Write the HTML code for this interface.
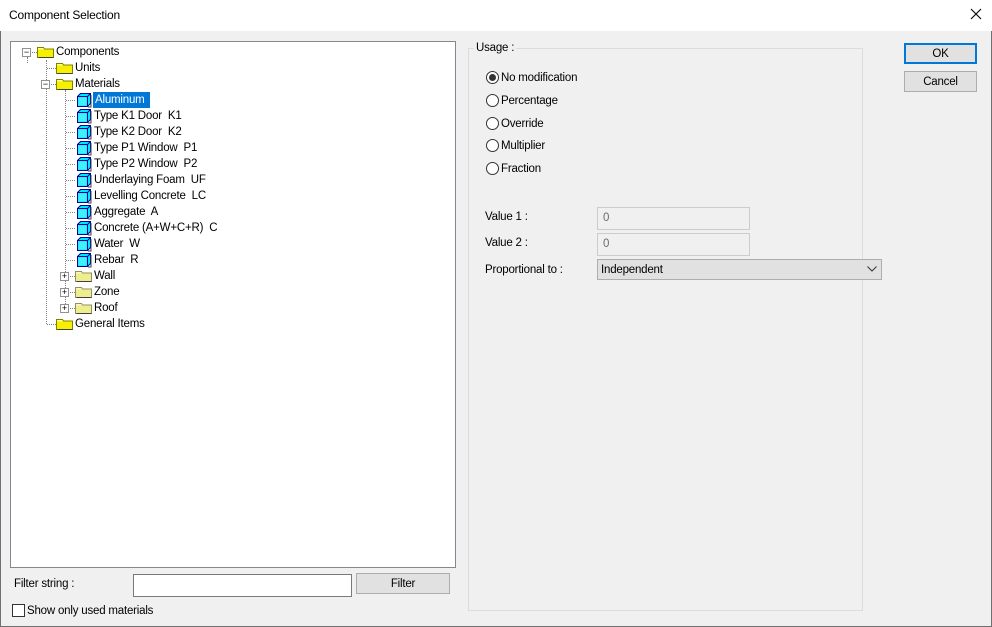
<!DOCTYPE html>
<html><head><meta charset="utf-8"><style>
*{box-sizing:border-box;margin:0;padding:0}
body{width:992px;height:627px;background:#f0f0f0;font-family:"Liberation Sans",sans-serif;font-size:11.5px;line-height:15px;letter-spacing:-0.2px;color:#000;position:relative;overflow:hidden}
.win{position:absolute;left:0;top:0;width:992px;height:627px;border:1px solid #707070;border-top:none}
.title{position:absolute;left:0;top:0;width:992px;height:31px;background:#fff}
.title span{position:absolute;left:9px;top:8px;font-size:12px}
.x{position:absolute;left:968px;top:6px;width:16px;height:16px}
.a{position:absolute}
.tree{position:absolute;left:10px;top:41px;width:446px;height:527px;background:#fff;border:1px solid #828790}
.row{position:absolute;height:16px;line-height:17px;white-space:nowrap}
.dv{position:absolute;border-left:1px dotted #808080;width:0}
.dh{position:absolute;border-top:1px dotted #808080;height:0}
.exp{position:absolute;width:9px;height:9px;border:1px solid #919191;background:#fff;font-size:9px;line-height:7px;text-align:center;color:#000;letter-spacing:0}
.btn{position:absolute;background:#e1e1e1;border:1px solid #adadad;text-align:center}
.inp{position:absolute;border:1px solid #7a7a7a;background:#fff}
.dis{position:absolute;border:1px solid #ccc;background:#f0f0f0;color:#6d6d6d;padding-left:5px;line-height:21px}
.rad{position:absolute;width:13px;height:13px;border:1px solid #333;border-radius:50%;background:#fff}
</style></head><body>
<div class="win"></div>
<div class="title"><span>Component Selection</span>
<svg class="x" viewBox="0 0 16 16"><path d="M3 3L13 13M13 3L3 13" stroke="#000" stroke-width="1.1"/></svg></div>

<div class="tree"></div>
<div class="dv" style="left:27px;top:57px;height:6px"></div>
<div class="dv" style="left:46px;top:60px;height:264px"></div>
<div class="dh" style="left:47px;top:68px;width:9px"></div>
<div class="dh" style="left:51px;top:84px;width:5px"></div>
<div class="dh" style="left:47px;top:324px;width:9px"></div>
<div class="dh" style="left:32px;top:52px;width:5px"></div>
<div class="dv" style="left:65px;top:90px;height:218px"></div>
<svg class="a" style="left:0;top:0" width="460" height="340">
<g stroke="#808080" stroke-dasharray="1 1">
<line x1="66" y1="100.5" x2="75" y2="100.5"/><line x1="66" y1="116.5" x2="75" y2="116.5"/><line x1="66" y1="132.5" x2="75" y2="132.5"/><line x1="66" y1="148.5" x2="75" y2="148.5"/><line x1="66" y1="164.5" x2="75" y2="164.5"/><line x1="66" y1="180.5" x2="75" y2="180.5"/><line x1="66" y1="196.5" x2="75" y2="196.5"/><line x1="66" y1="212.5" x2="75" y2="212.5"/><line x1="66" y1="228.5" x2="75" y2="228.5"/><line x1="66" y1="244.5" x2="75" y2="244.5"/><line x1="66" y1="260.5" x2="75" y2="260.5"/>
<line x1="70" y1="276.5" x2="75" y2="276.5"/><line x1="70" y1="292.5" x2="75" y2="292.5"/><line x1="70" y1="308.5" x2="75" y2="308.5"/>
</g>
<defs>
<g id="f"><path d="M0.5 2.5h6l1 1.5h9v8.5h-16z" fill="#ffff80" stroke="#808000"/><path d="M1 4.5h15v7.5h-15z" fill="#f4f000"/><path d="M1.5 12.5h15" stroke="#404040"/></g>
<g id="fp"><path d="M0.5 2.5h6l1 1.5h9v8.5h-16z" fill="#f8f8c0" stroke="#909060"/><path d="M1 4.5h15v7.5h-15z" fill="#eeee90"/><path d="M1.5 12.5h15" stroke="#404040"/></g>
<g id="c"><path d="M2.5 4.5l3-3h10v10l-3 3h-10z" fill="#00e8ff" stroke="#0000a0"/><path d="M2.5 4.5h10v10M12.5 4.5l3-3" fill="none" stroke="#0000a0"/><path d="M3.5 5.5h8v8h-8z" fill="#40f0ff"/><path d="M16 3v12h-3" fill="none" stroke="#404040"/></g>
</defs>
<use href="#f" x="37" y="45"/>
<use href="#f" x="56" y="61"/>
<use href="#f" x="56" y="77"/>
<use href="#c" x="75" y="92"/><use href="#c" x="75" y="108"/><use href="#c" x="75" y="124"/><use href="#c" x="75" y="140"/><use href="#c" x="75" y="156"/><use href="#c" x="75" y="172"/><use href="#c" x="75" y="188"/><use href="#c" x="75" y="204"/><use href="#c" x="75" y="220"/><use href="#c" x="75" y="236"/><use href="#c" x="75" y="252"/>
<use href="#fp" x="75" y="269"/><use href="#fp" x="75" y="285"/><use href="#fp" x="75" y="301"/>
<use href="#f" x="56" y="317"/>
</svg>
<div class="exp" style="left:22px;top:48px">−</div>
<div class="exp" style="left:41px;top:80px">−</div>
<div class="exp" style="left:60px;top:272px">+</div>
<div class="exp" style="left:60px;top:288px">+</div>
<div class="exp" style="left:60px;top:304px">+</div>

<div class="row" style="left:56px;top:44px">Components</div>
<div class="row" style="left:75px;top:60px">Units</div>
<div class="row" style="left:75px;top:76px">Materials</div>
<div class="row" style="left:93px;top:92px;background:#0078d7;color:#fff;padding:0 5px 0 2px">Aluminum</div>
<div class="row" style="left:94px;top:108px">Type K1 Door&nbsp; K1</div>
<div class="row" style="left:94px;top:124px">Type K2 Door&nbsp; K2</div>
<div class="row" style="left:94px;top:140px">Type P1 Window&nbsp; P1</div>
<div class="row" style="left:94px;top:156px">Type P2 Window&nbsp; P2</div>
<div class="row" style="left:94px;top:172px">Underlaying Foam&nbsp; UF</div>
<div class="row" style="left:94px;top:188px">Levelling Concrete&nbsp; LC</div>
<div class="row" style="left:94px;top:204px">Aggregate&nbsp; A</div>
<div class="row" style="left:94px;top:220px">Concrete (A+W+C+R)&nbsp; C</div>
<div class="row" style="left:94px;top:236px">Water&nbsp; W</div>
<div class="row" style="left:94px;top:252px">Rebar&nbsp; R</div>
<div class="row" style="left:94px;top:268px">Wall</div>
<div class="row" style="left:94px;top:284px">Zone</div>
<div class="row" style="left:94px;top:300px">Roof</div>
<div class="row" style="left:75px;top:316px">General Items</div>

<div class="a" style="left:14px;top:577px">Filter string :</div>
<div class="inp" style="left:133px;top:574px;width:219px;height:23px"></div>
<div class="btn" style="left:356px;top:573px;width:94px;height:21px;line-height:20px">Filter</div>
<div class="a" style="left:12px;top:604px;width:13px;height:13px;border:1px solid #333;background:#fff"></div>
<div class="a" style="left:27px;top:604px">Show only used materials</div>

<div class="a" style="left:468px;top:48px;width:395px;height:563px;border:1px solid #dcdcdc"></div>
<div class="a" style="left:474px;top:41px;background:#f0f0f0;padding:0 2px">Usage :</div>
<div class="rad" style="left:486px;top:71px"><div style="position:absolute;left:2px;top:2px;width:7px;height:7px;border-radius:50%;background:#333"></div></div>
<div class="a" style="left:501px;top:71px">No modification</div>
<div class="rad" style="left:486px;top:94px"></div><div class="a" style="left:501px;top:94px">Percentage</div>
<div class="rad" style="left:486px;top:117px"></div><div class="a" style="left:501px;top:117px">Override</div>
<div class="rad" style="left:486px;top:139px"></div><div class="a" style="left:501px;top:139px">Multiplier</div>
<div class="rad" style="left:486px;top:162px"></div><div class="a" style="left:501px;top:162px">Fraction</div>
<div class="a" style="left:485px;top:210px">Value 1 :</div>
<div class="dis" style="left:597px;top:207px;width:153px;height:23px">0</div>
<div class="a" style="left:485px;top:236px">Value 2 :</div>
<div class="dis" style="left:597px;top:233px;width:153px;height:23px">0</div>
<div class="a" style="left:485px;top:263px">Proportional to :</div>
<div class="a" style="left:597px;top:259px;width:285px;height:21px;border:1px solid #adadad;background:#e1e1e1;padding-left:3px;line-height:20px">Independent
<svg style="position:absolute;right:4px;top:6px" width="10" height="6"><path d="M0.5 0.5l4.5 4.5l4.5-4.5" fill="none" stroke="#333"/></svg></div>

<div class="btn" style="left:904px;top:43px;width:73px;height:21px;line-height:18px;border:2px solid #0078d7">OK</div>
<div class="btn" style="left:904px;top:71px;width:73px;height:21px;line-height:20px">Cancel</div>
</body></html>
